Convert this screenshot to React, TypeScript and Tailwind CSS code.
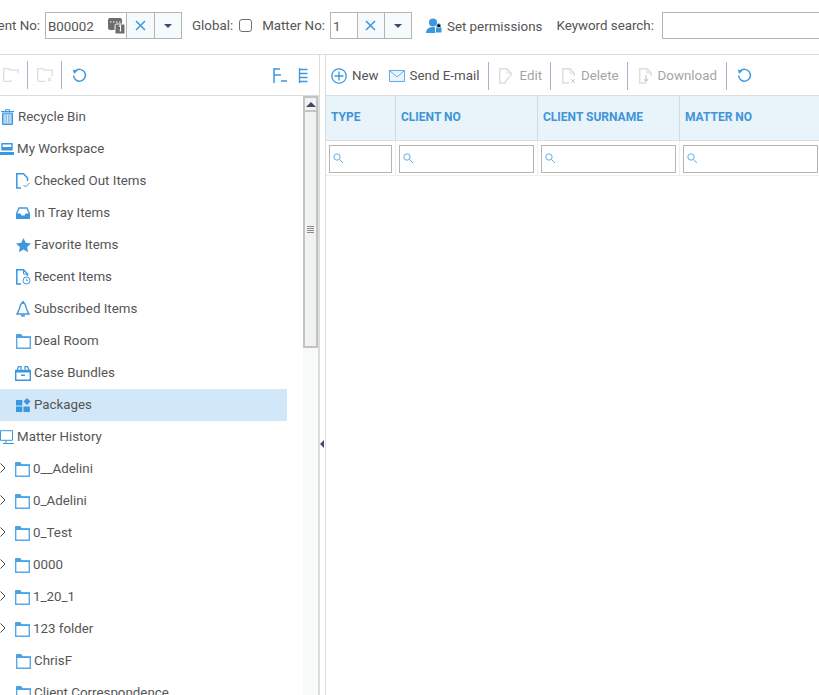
import { ReactNode } from "react";

const blue = "#3b97de";

const Svg = ({ w = 16, h = 16, children, className = "" }: { w?: number; h?: number; children: ReactNode; className?: string }) => (
  <svg width={w} height={h} viewBox={`0 0 ${w} ${h}`} fill="none" className={`shrink-0 ${className}`}>
    {children}
  </svg>
);

const FolderIcon = () => (
  <Svg w={15} h={15}>
    <path d="M.7 3h13.6v11.3H.7z" fill="#fff" stroke="#5aa8e6" strokeWidth="1.4" />
    <path d="M0 4V1.2C0 .6.5 0 1.2 0h4l1.6 2.4H15V4z" fill="#4aa1e3" />
  </Svg>
);

const RefreshIcon = () => (
  <Svg w={15} h={15}>
    <path d="M3.2 3.2A5.9 5.9 0 1 1 1.6 7.5" stroke={blue} strokeWidth="1.5" />
    <path d="M1 1.5l4.2 1.2L2 6z" fill={blue} />
  </Svg>
);

const DocIcon = ({ color, children }: { color: string; children?: ReactNode }) => (
  <Svg w={14} h={16}>
    <path d="M7 15H.7V.7h7.2l4.2 4.2V8" stroke={color} strokeWidth="1.5" />
    <path d="M7.8.7v4.4h4.3" stroke={color} />
    {children}
  </Svg>
);

const SearchIcon = () => (
  <Svg w={11} h={11}>
    <circle cx="4" cy="4" r="3.2" stroke="#5fb0ea" />
    <path d="M6.5 6.5L10 10" stroke="#5fb0ea" />
  </Svg>
);

const TrashIcon = () => (
  <Svg w={13} h={16}>
    <path d="M0 2.5h13M4.5 2V.7h4V2" stroke={blue} />
    <path d="M1.5 4h10v11.5h-10z" fill="#8cc3ee" stroke={blue} />
    <path d="M4 5.5v8.5M6.5 5.5v8.5M9 5.5v8.5" stroke="#d5e9f9" />
  </Svg>
);

const WorkspaceIcon = () => (
  <Svg w={14} h={13}>
    <path d="M2 .7h10v6H2z" fill="#fff" stroke={blue} strokeWidth="1.4" />
    <path d="M2 4h10v3H2z" fill={blue} />
    <path d="M0 9h14v3H0z" fill={blue} />
  </Svg>
);

const CheckedOutIcon = () => (
  <Svg w={15} h={16}>
    <path d="M5 15H.8V.8h6.7L11.5 5v3" stroke={blue} strokeWidth="1.5" />
    <path d="M7.5 12l2 2 4-4" stroke={blue} />
  </Svg>
);

const TrayIcon = () => (
  <Svg w={14} h={12}>
    <path d="M.7 11.3V6.5L3 1h8l2.3 5.5v4.8z" fill="#fff" stroke={blue} strokeWidth="1.3" />
    <path d="M.7 6.5h3.8l1 2h3l1-2h3.8v4.8H.7z" fill={blue} />
  </Svg>
);

const StarIcon = () => (
  <Svg w={15} h={14}>
    <path d="M7.5 0l2.2 4.8 5.3.6-3.9 3.6 1 5.2-4.6-2.6L2.9 14.2l1-5.2L0 5.4l5.3-.6z" fill={blue} />
  </Svg>
);

const RecentIcon = () => (
  <Svg w={15} h={16}>
    <path d="M5 15H.8V.8h6.7L11.5 5v2" stroke={blue} strokeWidth="1.5" />
    <path d="M7.5 .7V5h4" stroke={blue} />
    <circle cx="10.5" cy="11.5" r="3.5" stroke={blue} />
    <path d="M10.5 9.7v2h1.6" stroke={blue} strokeWidth=".8" />
  </Svg>
);

const BellIcon = () => (
  <Svg w={14} h={16}>
    <path d="M7 2C9 2 9.6 4 9.9 6c.3 2 2.2 5.3 3 7H1c.8-1.7 2.7-5 3-7C4.3 4 5 2 7 2z" stroke={blue} strokeWidth="1.4" />
    <path d="M5.2 14h3.6v1.6H5.2z" fill={blue} />
    <circle cx="7" cy="1.2" r="1.2" fill={blue} />
  </Svg>
);

const BundleIcon = () => (
  <Svg w={16} h={15}>
    <path d="M.7 4.5h14.6v9.8H.7z" stroke={blue} strokeWidth="1.4" />
    <path d="M2 4.5L3.5.7H6v3M14 4.5L12.5.7H10v3" stroke={blue} strokeWidth="1.2" />
    <path d="M0 4h16v2.5H0z" fill={blue} />
    <path d="M6 8.5h4V10H6z" fill={blue} />
  </Svg>
);

const PackagesIcon = () => (
  <Svg w={15} h={14}>
    <path d="M0 2h6.3v5.5H0zM0 8.5h6.3V14H0zM7.5 8.5h6.3V14H7.5z" fill={blue} />
    <path d="M11 0l3.5 3.5L11 7 7.5 3.5z" fill={blue} />
  </Svg>
);

const MonitorIcon = () => (
  <Svg w={14} h={14}>
    <path d="M.5.7h12v9.6H.5z" fill="#fff" stroke={blue} />
    <path d="M3 13.5h11M6 10.5v3" stroke={blue} />
  </Svg>
);

const Chevron = () => (
  <Svg w={6} h={10} className="absolute left-0 top-[10px]">
    <path d="M.5.5L5 5 .5 9.5" stroke="#444" />
  </Svg>
);

const XBtn = () => (
  <div className="w-7 border-l border-[#b5b5b5] bg-[#f5fafd] flex items-center justify-center">
    <svg width="11" height="11" viewBox="0 0 11 11">
      <path d="M1 1l9 9M10 1l-9 9" stroke={blue} strokeWidth="1.5" />
    </svg>
  </div>
);

const DropBtn = () => (
  <div className="w-[27px] border-l border-[#b5b5b5] bg-[#f5fafd] flex items-center justify-center">
    <div className="w-0 h-0 border-x-[4px] border-x-transparent border-t-[4px] border-t-[#3d4a6b]" />
  </div>
);

const Sep = () => <div className="w-px h-[28px] bg-[#a9b2c6] shrink-0" />;

const tree: { icon: ReactNode; label: string; indent: string; chevron?: boolean; active?: boolean }[] = [
  { icon: <TrashIcon />, label: "Recycle Bin", indent: "pl-[1px] gap-[4px]" },
  { icon: <WorkspaceIcon />, label: "My Workspace", indent: "gap-[3px]" },
  { icon: <CheckedOutIcon />, label: "Checked Out Items", indent: "pl-4 gap-[3px]" },
  { icon: <TrayIcon />, label: "In Tray Items", indent: "pl-4 gap-1" },
  { icon: <StarIcon />, label: "Favorite Items", indent: "pl-4 gap-[3px]" },
  { icon: <RecentIcon />, label: "Recent Items", indent: "pl-4 gap-[3px]" },
  { icon: <BellIcon />, label: "Subscribed Items", indent: "pl-4 gap-1" },
  { icon: <FolderIcon />, label: "Deal Room", indent: "pl-4 gap-[3px]" },
  { icon: <BundleIcon />, label: "Case Bundles", indent: "pl-[15px] gap-[3px]" },
  { icon: <PackagesIcon />, label: "Packages", indent: "pl-4 gap-[3px]", active: true },
  { icon: <MonitorIcon />, label: "Matter History", indent: "gap-[3px]" },
  { icon: <FolderIcon />, label: "0__Adelini", indent: "pl-[15px] gap-[3px]", chevron: true },
  { icon: <FolderIcon />, label: "0_Adelini", indent: "pl-[15px] gap-[3px]", chevron: true },
  { icon: <FolderIcon />, label: "0_Test", indent: "pl-[15px] gap-[3px]", chevron: true },
  { icon: <FolderIcon />, label: "0000", indent: "pl-[15px] gap-[3px]", chevron: true },
  { icon: <FolderIcon />, label: "1_20_1", indent: "pl-[15px] gap-[3px]", chevron: true },
  { icon: <FolderIcon />, label: "123 folder", indent: "pl-[15px] gap-[3px]", chevron: true },
  { icon: <FolderIcon />, label: "ChrisF", indent: "pl-4 gap-[3px]" },
  { icon: <FolderIcon />, label: "Client Correspondence", indent: "pl-4 gap-[3px]" },
];

const columns = [
  { name: "TYPE", w: "w-[70px]", input: "w-[63px] ml-[3px]" },
  { name: "CLIENT NO", w: "w-[142px]", input: "w-[135px] ml-[3px]" },
  { name: "CLIENT SURNAME", w: "w-[142px]", input: "w-[135px] ml-[3px]" },
  { name: "MATTER NO", w: "w-[142px]", input: "w-[135px] ml-[3px]" },
];

export default function App() {
  return (
    <div className="w-[819px] h-[695px] overflow-hidden bg-white text-[13.33px] text-[#555] font-['Roboto',sans-serif]">
      {/* top filter bar */}
      <div className="h-[55px] border-b border-[#dcdcdc] flex items-center pb-[3px] whitespace-nowrap">
        <span className="w-[40px] shrink-0 flex justify-end overflow-hidden">
          <span className="shrink-0">Client No:</span>
        </span>
        <div className="ml-[5px] w-[137px] h-[27px] shrink-0 border border-[#b5b5b5] flex">
          <div className="w-[80px] relative pl-[2px] leading-[27px]">
            B00002
            <svg width="17" height="17" viewBox="0 0 17 17" className="absolute left-[62px] top-[4px]">
              <rect x="0" y="1" width="14" height="12" rx="2" fill="#6d6d6d" />
              <path d="M2 5h1.5M5 5h1.5M8 5h1.5M11 5h1.5" stroke="#fff" strokeWidth="1.2" />
              <rect x="7" y="7" width="10" height="10" rx="1.5" fill="#6d6d6d" stroke="#fff" />
              <path d="M11 9.5l1.4-.8v5.8" stroke="#fff" strokeWidth="1.3" />
            </svg>
          </div>
          <XBtn />
          <DropBtn />
        </div>
        <label className="ml-[10px]">Global:</label>
        <div className="ml-[6px] w-[13px] h-[13px] rounded-[3px] border border-[#707070] shrink-0" />
        <label className="ml-[10px]">Matter No:</label>
        <div className="ml-[5px] w-[82px] h-[27px] shrink-0 border border-[#b5b5b5] flex">
          <div className="w-[26px] pl-[2px] leading-[27px]">1</div>
          <XBtn />
          <DropBtn />
        </div>
        <svg width="16" height="16" viewBox="0 0 16 16" className="ml-[14px] shrink-0">
          <circle cx="7" cy="4.5" r="4" fill={blue} />
          <path d="M0 15c0-4 3-6 7-6 1 0 2 .2 3 .6V15z" fill={blue} />
          <rect x="9.5" y="9" width="6.5" height="6" rx="1" fill={blue} stroke="#fff" />
          <path d="M11 9V7.5a1.7 1.7 0 0 1 3.4 0V9" stroke={blue} />
        </svg>
        <span className="ml-[5px] pt-[2px]">Set permissions</span>
        <label className="ml-[14px]">Keyword search:</label>
        <div className="ml-[8px] w-[170px] h-[27px] shrink-0 border border-[#b5b5b5]" />
      </div>

      <div className="flex h-[640px]">
        {/* left tree panel */}
        <div className="w-[319px] shrink-0 flex flex-col overflow-hidden">
          <div className="h-[41px] shrink-0 border-b border-[#dcdcdc] flex items-center pl-[3px] pr-[11px]">
            <Svg w={16} h={15} className="-mt-[1px]">
              <path d="M.7 14.3V1.7h5l1.5 1.5h8v3M.7 14.3h7l1-1" stroke="#dedede" strokeWidth="1.3" />
            </Svg>
            <div className="ml-2"><Sep /></div>
            <div className="ml-[9px] -mt-[1px]">
              <Svg w={16} h={15}>
                <path d="M.7 14.3V1.7h5l1.5 1.5h8v6M.7 14.3h8M11 11l3 3M14 11l-3 3" stroke="#dedede" strokeWidth="1.3" />
              </Svg>
            </div>
            <div className="ml-[8px]"><Sep /></div>
            <div className="ml-[10px]"><RefreshIcon /></div>
            <div className="ml-auto flex gap-[11px]">
              <Svg w={14} h={15}>
                <path d="M1 0v15M1 1h6M1 7h7M8 13h6" stroke={blue} strokeWidth="1.5" />
              </Svg>
              <Svg w={10} h={15}>
                <path d="M1.5 0v15M1.5 1.5h8M1.5 5.5h8M1.5 9.5h8M1.5 13.5h8" stroke={blue} strokeWidth="1.3" />
              </Svg>
            </div>
          </div>
          <div className="flex-1 flex min-h-0">
            <div className="flex-1 pt-[5px] pr-[16px] min-w-0 overflow-hidden">
              {tree.map((row) => (
                <div
                  key={row.label}
                  className={`relative h-[32px] shrink-0 flex items-center whitespace-nowrap ${row.indent} ${row.active ? "bg-[#d2e7f7]" : ""}`}
                >
                  {row.chevron && <Chevron />}
                  {row.icon}
                  <span>{row.label}</span>
                </div>
              ))}
            </div>
            {/* scrollbar */}
            <div className="w-[16px] shrink-0 bg-[#f8f9f9] border-r border-[#dcdcdc]">
              <div className="h-[16px] border-2 border-[#c3c3c3] bg-[#f1f2f2] flex items-center justify-center">
                <div className="w-0 h-0 border-x-[5px] border-x-transparent border-b-[5px] border-b-[#44476f]" />
              </div>
              <div className="h-[236px] border-2 border-t-0 border-[#c3c3c3] bg-[#f1f2f2] flex flex-col items-center justify-center gap-px">
                <div className="w-[7px] h-px bg-[#8a8a8a]" />
                <div className="w-[7px] h-px bg-[#8a8a8a]" />
                <div className="w-[7px] h-px bg-[#8a8a8a]" />
                <div className="w-[7px] h-px bg-[#8a8a8a]" />
              </div>
            </div>
          </div>
        </div>

        {/* splitter */}
        <div className="w-[7px] shrink-0 border-x border-[#dcdcdc] bg-white pt-[385px]">
          <div className="w-0 h-0 border-y-[4px] border-y-transparent border-r-[4px] border-r-[#44476f]" />
        </div>

        {/* right grid panel */}
        <div className="flex-1 min-w-0 flex flex-col">
          <div className="h-[40px] shrink-0 flex items-center pl-[5px] pt-[1px] whitespace-nowrap">
            <Svg w={16} h={16}>
              <circle cx="8" cy="8" r="7.2" stroke={blue} strokeWidth="1.3" />
              <path d="M8 3.5v9M3.5 8h9" stroke={blue} strokeWidth="1.3" />
            </Svg>
            <span className="ml-[5px]">New</span>
            <div className="ml-[10px]">
              <Svg w={16} h={12}>
                <path d="M.5.5h15v11H.5z" fill="#eaf4fc" stroke="#63ace6" />
                <path d="M.5.5L8 7l7.5-6.5" stroke="#63ace6" />
              </Svg>
            </div>
            <span className="ml-[5px]">Send E-mail</span>
            <div className="ml-[9px]"><Sep /></div>
            <div className="ml-[10px]">
              <DocIcon color="#dedede"><path d="M6 14l5-6" stroke="#dedede" strokeWidth="1.3" /></DocIcon>
            </div>
            <span className="ml-[6px] text-[#a5a5a5]">Edit</span>
            <div className="ml-[8px]"><Sep /></div>
            <div className="ml-[11px]">
              <DocIcon color="#dedede"><path d="M9 11l4 4M13 11l-4 4" stroke="#c9c9c9" /></DocIcon>
            </div>
            <span className="ml-[5px] text-[#a5a5a5]">Delete</span>
            <div className="ml-[8px]"><Sep /></div>
            <div className="ml-[11px]">
              <DocIcon color="#dedede"><path d="M7 7v6M5 11l2 2.5L9 11" stroke="#c9c9c9" strokeWidth="1.2" /></DocIcon>
            </div>
            <span className="ml-[5px] text-[#a5a5a5]">Download</span>
            <div className="ml-[9px]"><Sep /></div>
            <div className="ml-[10px]"><RefreshIcon /></div>
          </div>

          <div className="flex h-[46px] shrink-0 bg-[#e8f3fa] border-y border-[#dcdfe2]">
            {columns.map((c) => (
              <div
                key={c.name}
                className={`${c.w} shrink-0 border-r border-[#d0dae2] pl-[5px] pb-[2px] flex items-center text-[12px] font-bold text-[#3f95d8]`}
              >
                {c.name}
              </div>
            ))}
          </div>
          <div className="flex h-[35px] shrink-0 border-b border-[#efefef]">
            {columns.map((c) => (
              <div key={c.name} className={`${c.w} shrink-0 border-r border-[#efefef] flex items-center pt-[1px]`}>
                <div className={`${c.input} h-[28px] border border-[#b5b5b5] flex items-center pl-[3px]`}>
                  <SearchIcon />
                </div>
              </div>
            ))}
          </div>
        </div>
      </div>
    </div>
  );
}
